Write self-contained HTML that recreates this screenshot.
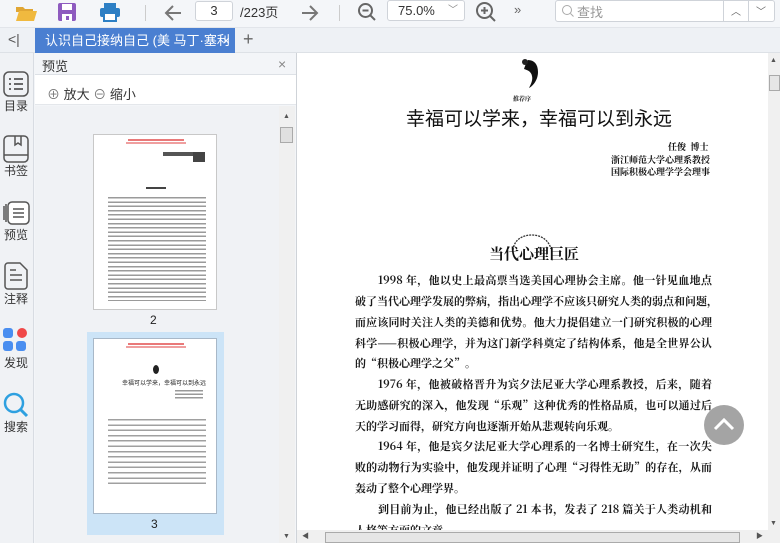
<!DOCTYPE html>
<html><head><meta charset="utf-8"><style>
*{margin:0;padding:0;box-sizing:border-box}
body{width:780px;height:543px;overflow:hidden;background:#f3f5f8;font-family:"Liberation Sans","Noto Sans CJK SC",sans-serif;position:relative;color:#333}
.a{position:absolute}
.sb{font-family:"Noto Serif CJK SC","Noto Sans CJK SC",serif;font-weight:bold;font-size:13px;color:#111;white-space:nowrap}
.ln{position:absolute;left:355px;width:357px;text-align:justify;text-align-last:justify;text-justify:inter-character;font-family:"Noto Serif CJK SC",serif;font-weight:bold;font-size:11px;color:#1a1a1a;white-space:nowrap;line-height:16px}
.ic{position:absolute;left:0;width:32px;text-align:center;font-size:12px;color:#333}
</style></head><body>
<!-- toolbar -->
<div class="a" style="left:0;top:0;width:780px;height:28px;background:#f4f6f9;border-bottom:1px solid #e2e5ea"></div>
<svg class="a" style="left:14px;top:3px" width="24" height="20"><path d="M2 4h7l2 2h8v3H2z" fill="#e0a634"/><path d="M2 18L5 8h18l-3 10z" fill="#f0b93f"/></svg>
<svg class="a" style="left:57px;top:2px" width="20" height="20"><rect x="1" y="1" width="18" height="18" rx="2" fill="#8e5bbf"/><rect x="5" y="2" width="10" height="6" fill="#fff"/><rect x="5" y="12" width="10" height="7" fill="#fff"/><rect x="9" y="14" width="3" height="4" fill="#8e5bbf"/></svg>
<svg class="a" style="left:99px;top:2px" width="22" height="20"><rect x="5" y="1" width="12" height="5" fill="#2d7fc4"/><rect x="1" y="6" width="20" height="9" rx="2" fill="#2d7fc4"/><rect x="5" y="11" width="12" height="8" fill="#fff" stroke="#2d7fc4" stroke-width="2"/></svg>
<div class="a" style="left:145px;top:5px;width:1px;height:16px;background:#ccc"></div>
<svg class="a" style="left:163px;top:3px" width="20" height="20"><path d="M18 10H3M10 3L3 10l7 7" stroke="#777" stroke-width="2" fill="none"/></svg>
<div class="a" style="left:195px;top:1px;width:38px;height:20px;border:1px solid #cfd3d9;border-radius:3px;background:#fff;font-size:13px;text-align:center;line-height:18px">3</div>
<div class="a" style="left:240px;top:2px;font-size:13px;color:#333">/223页</div>
<svg class="a" style="left:300px;top:3px" width="20" height="20"><path d="M2 10h15M10 3l7 7-7 7" stroke="#777" stroke-width="2" fill="none"/></svg>
<div class="a" style="left:339px;top:5px;width:1px;height:16px;background:#ccc"></div>
<svg class="a" style="left:357px;top:2px" width="20" height="20"><circle cx="8.5" cy="8.5" r="6.5" stroke="#666" stroke-width="2" fill="none"/><path d="M5.5 8.5h6M13 13l5 5" stroke="#666" stroke-width="2"/></svg>
<div class="a" style="left:387px;top:0;width:78px;height:21px;border:1px solid #cfd3d9;border-radius:3px;background:#fff;font-size:13px;line-height:19px;padding-left:10px">75.0%<span style="position:absolute;right:6px;color:#888;font-size:10px">﹀</span></div>
<svg class="a" style="left:475px;top:1px" width="22" height="22"><circle cx="9.5" cy="9.5" r="7.5" stroke="#666" stroke-width="2" fill="none"/><path d="M6 9.5h7M9.5 6v7M15 15l5 5" stroke="#666" stroke-width="2"/></svg>
<div class="a" style="left:514px;top:2px;font-size:13px;color:#666">»</div>
<div class="a" style="left:555px;top:0;width:220px;height:22px;border:1px solid #cfd3d9;border-radius:3px;background:#fff"></div>
<svg class="a" style="left:561px;top:4px" width="14" height="14"><circle cx="6" cy="6" r="4.5" stroke="#aaa" fill="none"/><path d="M9.5 9.5l3 3" stroke="#aaa"/></svg>
<div class="a" style="left:577px;top:2px;font-size:13px;color:#999">查找</div>
<div class="a" style="left:723px;top:0;width:1px;height:22px;background:#cfd3d9"></div>
<div class="a" style="left:748px;top:0;width:1px;height:22px;background:#cfd3d9"></div>
<div class="a" style="left:731px;top:3px;font-size:10px;color:#666">︿</div>
<div class="a" style="left:756px;top:3px;font-size:10px;color:#666">﹀</div>
<!-- tab bar -->
<div class="a" style="left:0;top:28px;width:780px;height:25px;background:#eef1f5;border-bottom:1px solid #dde1e6"></div>
<div class="a" style="left:8px;top:31px;font-size:14px;color:#555">&lt;|</div>
<div class="a" style="left:35px;top:28px;width:200px;height:25px;background:#4a7fd1;color:#fff;font-size:13px;line-height:25px;padding-left:10px;white-space:nowrap;overflow:hidden">认识自己接纳自己 (美 马丁·塞利 <span style="position:absolute;right:5px">×</span></div>
<div class="a" style="left:243px;top:29px;font-size:18px;color:#666">+</div>
<!-- left icon bar -->
<div class="a" style="left:0;top:53px;width:34px;height:490px;background:#f0f2f5;border-right:1px solid #d8dce2"></div>
<svg class="a" style="left:3px;top:71px" width="26" height="26"><rect x="1" y="1" width="24" height="24" rx="5" stroke="#555" stroke-width="1.5" fill="none"/><path d="M6 8h2M11 8h9M6 13h2M11 13h9M6 18h2M11 18h9" stroke="#555" stroke-width="1.8"/></svg>
<div class="ic" style="top:97px">目录</div>
<svg class="a" style="left:3px;top:135px" width="26" height="28"><rect x="1" y="1" width="24" height="26" rx="4" stroke="#555" stroke-width="1.5" fill="none"/><path d="M1 20h24M12 1v9l3-2 3 2V1" stroke="#555" stroke-width="1.5" fill="none"/></svg>
<div class="ic" style="top:162px">书签</div>
<svg class="a" style="left:3px;top:198px" width="28" height="28"><rect x="5" y="4" width="21" height="22" rx="4" stroke="#555" stroke-width="1.5" fill="#fff"/><path d="M3 6v18M1 8v14M10 11h11M10 15h11M10 19h11" stroke="#555" stroke-width="1.5"/></svg>
<div class="a" style="left:29px;top:205px;width:0;height:0;border:6px solid transparent;border-right-color:#fff"></div>
<div class="ic" style="top:226px">预览</div>
<svg class="a" style="left:4px;top:262px" width="24" height="28"><path d="M1 4a3 3 0 013-3h12l7 7v16a3 3 0 01-3 3H4a3 3 0 01-3-3z" stroke="#555" stroke-width="1.5" fill="none"/><path d="M6 13h12M6 18h12M6 8h6" stroke="#555" stroke-width="1.5"/></svg>
<div class="ic" style="top:290px">注释</div>
<svg class="a" style="left:2px;top:327px" width="26" height="26"><rect x="1" y="1" width="10" height="10" rx="3" fill="#4a8ef0"/><circle cx="20" cy="6" r="5" fill="#f04848"/><rect x="1" y="14" width="10" height="10" rx="3" fill="#4a8ef0"/><rect x="14" y="14" width="10" height="10" rx="3" fill="#4a8ef0"/></svg>
<div class="ic" style="top:354px">发现</div>
<svg class="a" style="left:2px;top:391px" width="28" height="28"><circle cx="12" cy="12" r="9" stroke="#2ea0e0" stroke-width="2.5" fill="none"/><path d="M19 19l6 6" stroke="#2ea0e0" stroke-width="3"/></svg>
<div class="ic" style="top:418px">搜索</div>
<!-- preview panel -->
<div class="a" style="left:35px;top:53px;width:261px;height:22px;background:#f3f5f8;border-bottom:1px solid #dde1e6"></div>
<div class="a" style="left:42px;top:56px;font-size:13px">预览</div>
<div class="a" style="left:278px;top:56px;font-size:14px;color:#888">×</div>
<div class="a" style="left:35px;top:75px;width:261px;height:30px;background:#fff;border-bottom:1px solid #e4e7eb"></div>
<div class="a" style="left:47px;top:84px;font-size:13px"><span style="color:#777">⊕</span> 放大 <span style="color:#777">⊖</span> 缩小</div>
<div class="a" style="left:35px;top:106px;width:244px;height:437px;background:#f0f2f5"></div>
<div class="a" style="left:279px;top:106px;width:16px;height:437px;background:#f0f0f0"></div>
<div class="a" style="left:280px;top:127px;width:13px;height:16px;background:#e0e0e0;border:1px solid #aaa"></div>
<div class="a" style="left:283px;top:113px;font-size:7px;color:#555">▲</div>
<div class="a" style="left:283px;top:533px;font-size:7px;color:#555">▼</div>
<!-- thumb 2 -->
<div class="a" style="left:93px;top:134px;width:124px;height:176px;background:#fff;border:1px solid #c8c8c8"></div>
<div class="a" style="left:128px;top:139px;width:56px;height:2px;background:#e04040;opacity:.7"></div>
<div class="a" style="left:126px;top:142px;width:60px;height:2px;background:#e04040;opacity:.5"></div>
<div class="a" style="left:163px;top:152px;width:30px;height:4px;background:#555"></div>
<div class="a" style="left:193px;top:152px;width:12px;height:10px;background:#444"></div>
<div class="a" style="left:146px;top:187px;width:20px;height:2px;background:#444"></div>
<div class="a" style="left:108px;top:196px;width:98px;height:105px;background:repeating-linear-gradient(#fff 0 1px,#9a9a9a 1px 2.5px,#fff 2.5px 4.3px)"></div>
<div class="a" style="left:150px;top:313px;font-size:12px;color:#222">2</div>
<!-- thumb 3 -->
<div class="a" style="left:87px;top:332px;width:137px;height:203px;background:#cce4f7"></div>
<div class="a" style="left:93px;top:338px;width:124px;height:176px;background:#fff;border:1px solid #a8b8c8"></div>
<div class="a" style="left:128px;top:343px;width:56px;height:2px;background:#e04040;opacity:.7"></div>
<div class="a" style="left:126px;top:346px;width:60px;height:2px;background:#e04040;opacity:.5"></div>
<div class="a" style="left:153px;top:365px;width:6px;height:9px;border-radius:50%;background:#222"></div>
<div class="a" style="left:122px;top:378px;font-size:6px;color:#222">幸福可以学来，幸福可以到永远</div>
<div class="a" style="left:175px;top:389px;width:28px;height:10px;background:repeating-linear-gradient(#fff 0 1px,#999 1px 2.5px,#fff 2.5px 3.5px)"></div>
<div class="a" style="left:108px;top:418px;width:98px;height:70px;background:repeating-linear-gradient(#fff 0 1px,#a0a0a0 1px 2.5px,#fff 2.5px 5.3px)"></div>
<div class="a" style="left:151px;top:517px;font-size:12px;color:#222">3</div>
<!-- document area -->
<div class="a" style="left:296px;top:53px;width:1px;height:490px;background:#cfd3d8"></div>
<div class="a" style="left:297px;top:53px;width:471px;height:477px;background:#fff"></div>
<div class="a" style="left:768px;top:53px;width:12px;height:490px;background:#f0f0f0"></div>
<div class="a" style="left:769px;top:75px;width:11px;height:16px;background:#e6e6e6;border:1px solid #aaa"></div>
<div class="a" style="left:770px;top:57px;font-size:7px;color:#555">▲</div>
<div class="a" style="left:770px;top:520px;font-size:7px;color:#555">▼</div>
<div class="a" style="left:297px;top:530px;width:471px;height:13px;background:#f0f0f0"></div>
<div class="a" style="left:325px;top:532px;width:415px;height:11px;background:#e6e6e6;border:1px solid #aaa"></div>
<div class="a" style="left:302px;top:531px;font-size:7px;color:#555">◀</div>
<div class="a" style="left:756px;top:531px;font-size:7px;color:#555">▶</div>
<!-- page content -->
<svg class="a" style="left:515px;top:58px" width="30" height="32"><path d="M13 2c6 0 10 4 10 12 0 8-5 14-9 16 2-4 4-8 3-12-1-5-5-6-8-7 1-3 2-6 4-9z" fill="#111"/><circle cx="10" cy="4" r="3" fill="#222"/></svg>
<div class="a sb" style="left:513px;top:94px;font-size:6px">推荐序</div>
<div class="a" style="left:406px;top:104px;font-size:19px;font-family:'Noto Sans CJK SC',sans-serif;color:#111;white-space:nowrap">幸福可以学来，幸福可以到永远</div>
<div class="a sb" style="left:668px;top:140px;font-size:9px">任俊 &nbsp;博士</div>
<div class="a sb" style="left:611px;top:153px;font-size:9px">浙江师范大学心理系教授</div>
<div class="a sb" style="left:611px;top:165px;font-size:9px">国际积极心理学学会理事</div>
<svg class="a" style="left:508px;top:232px" width="50" height="20"><path d="M5 18C6 8 14 3 24 3s17 6 19 14" stroke="#333" stroke-width="1.3" fill="none" stroke-dasharray="2 1"/></svg>
<div class="a sb" style="left:489px;top:243px;font-size:15px">当代心理巨匠</div>
<div class="ln" style="top:272px;left:378px;width:334px">1998 年，他以史上最高票当选美国心理协会主席。他一针见血地点</div>
<div class="ln" style="top:293px">破了当代心理学发展的弊病，指出心理学不应该只研究人类的弱点和问题，</div>
<div class="ln" style="top:314px">而应该同时关注人类的美德和优势。他大力提倡建立一门研究积极的心理</div>
<div class="ln" style="top:335px">科学——积极心理学，并为这门新学科奠定了结构体系，他是全世界公认</div>
<div class="ln" style="top:355px;width:auto;text-align-last:auto">的“积极心理学之父”。</div>
<div class="ln" style="top:376px;left:378px;width:334px">1976 年，他被破格晋升为宾夕法尼亚大学心理系教授，后来，随着</div>
<div class="ln" style="top:397px">无助感研究的深入，他发现“乐观”这种优秀的性格品质，也可以通过后</div>
<div class="ln" style="top:418px;width:auto;text-align-last:auto">天的学习而得，研究方向也逐渐开始从悲观转向乐观。</div>
<div class="ln" style="top:438px;left:378px;width:334px">1964 年，他是宾夕法尼亚大学心理系的一名博士研究生，在一次失</div>
<div class="ln" style="top:459px">败的动物行为实验中，他发现并证明了心理“习得性无助”的存在，从而</div>
<div class="ln" style="top:480px;width:auto;text-align-last:auto">轰动了整个心理学界。</div>
<div class="ln" style="top:501px;left:378px;width:334px">到目前为止，他已经出版了 21 本书，发表了 218 篇关于人类动机和</div>
<div class="ln" style="top:522px;width:auto;text-align-last:auto;height:8px;overflow:hidden">人格等方面的文章。</div>
<!-- back to top -->
<div class="a" style="left:704px;top:405px;width:40px;height:40px;border-radius:50%;background:#9a9a9a;opacity:.9"></div>
<svg class="a" style="left:704px;top:405px" width="40" height="40"><path d="M11 24l9-9 9 9" stroke="#fff" stroke-width="3" fill="none"/></svg>
</body></html>
